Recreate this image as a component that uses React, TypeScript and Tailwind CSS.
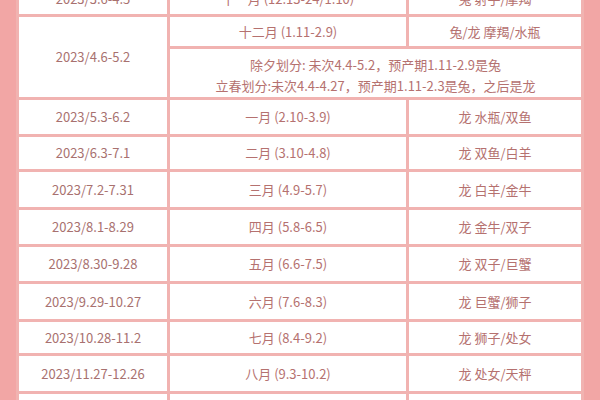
const rows: { date: string; month: string; sign: string; h: string }[] = [
  { date: '2023/5.3-6.2', month: '一月 (2.10-3.9)', sign: '龙 水瓶/双鱼', h: 'h-[34px]' },
  { date: '2023/6.3-7.1', month: '二月 (3.10-4.8)', sign: '龙 双鱼/白羊', h: 'h-[32px]' },
  { date: '2023/7.2-7.31', month: '三月 (4.9-5.7)', sign: '龙 白羊/金牛', h: 'h-[35px]' },
  { date: '2023/8.1-8.29', month: '四月 (5.8-6.5)', sign: '龙 金牛/双子', h: 'h-[34px]' },
  { date: '2023/8.30-9.28', month: '五月 (6.6-7.5)', sign: '龙 双子/巨蟹', h: 'h-[34px]' },
  { date: '2023/9.29-10.27', month: '六月 (7.6-8.3)', sign: '龙 巨蟹/狮子', h: 'h-[35px]' },
  { date: '2023/10.28-11.2', month: '七月 (8.4-9.2)', sign: '龙 狮子/处女', h: 'h-[31px]' },
  { date: '2023/11.27-12.26', month: '八月 (9.3-10.2)', sign: '龙 处女/天秤', h: 'h-[35px]' },
];

function Cell({ children, className = '' }: { children?: React.ReactNode; className?: string }) {
  return (
    <div className={`bg-white flex items-center justify-center text-center ${className}`}>
      {children}
    </div>
  );
}

export default function App() {
  return (
    <div
      className="w-[600px] h-[400px] overflow-hidden bg-[#f2a6a5] pl-[16px] text-[13px] text-[#b5716f]"
      style={{ fontFamily: '"Noto Sans CJK SC", "Noto Sans", sans-serif' }}
    >
      <div className="w-[568px] -mt-[20px] bg-[#f1b3b1] p-[3px] grid grid-cols-[148px_236px_172px] gap-[3px]">
        {/* partially visible top row */}
        <Cell className="h-[31px] text-[#a8716f]">2023/3.6-4.5</Cell>
        <Cell className="h-[31px]">十一月 (12.13-24/1.10)</Cell>
        <Cell className="h-[31px]">兔 射手/摩羯</Cell>

        {/* merged block */}
        <Cell className="row-span-2 text-[#a8716f]">2023/4.6-5.2</Cell>
        <Cell className="h-[29px]">十二月 (1.11-2.9)</Cell>
        <Cell className="h-[29px]">兔/龙 摩羯/水瓶</Cell>
        <Cell className="col-span-2 h-[48px] flex-col leading-[21px] pt-[4px]">
          <span>除夕划分: 未次4.4-5.2，预产期1.11-2.9是兔</span>
          <span>立春划分:未次4.4-4.27，预产期1.11-2.3是兔，之后是龙</span>
        </Cell>

        {rows.map((r) => (
          <div key={r.date} className="contents">
            <Cell className={`${r.h} text-[#a8716f]`}>{r.date}</Cell>
            <Cell className={r.h}>{r.month}</Cell>
            <Cell className={r.h}>{r.sign}</Cell>
          </div>
        ))}

        <Cell className="h-[30px]" />
        <Cell className="h-[30px]" />
        <Cell className="h-[30px]" />
      </div>
    </div>
  );
}
